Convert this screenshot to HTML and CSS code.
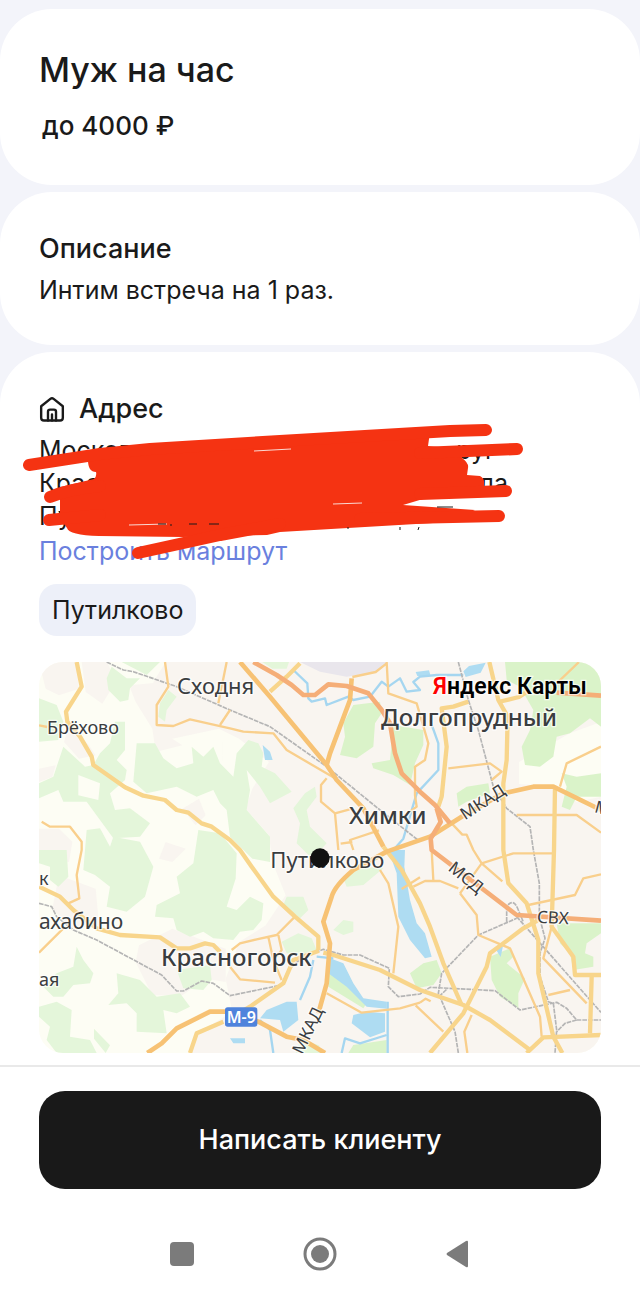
FILE: index.html
```html
<!DOCTYPE html>
<html lang="ru">
<head>
<meta charset="UTF-8">
<meta name="viewport" content="width=device-width, initial-scale=1">
<title>Муж на час</title>
<link rel="stylesheet" href="styles.css">
</head>
<body>

<main class="content">
  <section class="card card-title">
    <h1>Муж на час</h1>
    <p class="price">до 4000 ₽</p>
  </section>

  <section class="card card-description">
    <h2>Описание</h2>
    <p class="text">Интим встреча на 1 раз.</p>
  </section>

  <section class="card card-address">
    <h2 class="with-icon">
      <svg class="icon-home" viewBox="0 0 24 24" aria-hidden="true">
        <path d="M2 9.5 L10.5 2.6 Q12 1.4 13.5 2.6 L22 9.5 V20 Q22 22.6 19.4 22.6 H4.6 Q2 22.6 2 20 Z"/>
        <path d="M8.3 22.5 V14.5 Q8.3 12.6 10.2 12.6 H13.8 Q15.7 12.6 15.7 14.5 V22.5 M12 17 V22.5"/>
      </svg>
      Адрес
    </h2>
    <div class="address">
      <div class="text address-lines">
        <p class="address-line"><span>Московс</span><span>руг</span></p>
        <p class="address-line wide"><span>Крас</span><span>ла</span></p>
        <p class="address-line"><span>Пу</span></p>
      </div>
      <a class="route" href="#route">Построить маршрут</a>
      <svg class="scribble" viewBox="0 0 562 132" aria-hidden="true">
        <path class="fill" d="M49 26 L111 14 L241 3 L391 -2 L389 12 L423 15 L423 24 Q430 29 429 34 L428 41 L441 42 Q446 45 445 50 L445 63 L384 65 L364 71 L436 76 L411 88 L241 98 L228 101 L144 103 L60 102 Q30 101 28 94 L21 84 L21 66 L21 53 L55 45 Q58 42 57 38 Q49 38 49 26 Z"/>
        <path class="stroke" d="M-10 31 L61 20 L111 15 L241 7 L411 -3 L447 -4"/>
        <path class="stroke" d="M381 19 L478 15"/>
        <path class="stroke" d="M11 63 Q30 55 61 52"/>
        <path class="stroke" d="M381 60 L467 57"/>
        <path class="stroke" d="M10 86 L61 81"/>
        <path class="stroke" d="M321 85 L460 82"/>
        <path class="stroke" d="M99 119 L181 101 L241 90"/>
        <path class="slit" d="M90 91 L128 90 M215 17 L252 15 M294 70 L323 69"/>
        <path class="mark" d="M119 90 h8 M132 90 v2 M150 90 h8 M170 90 h10 M309 93 v2 M361 93 v3 M380 93 l-1 3 M398 73 h16"/>
      </svg>
    </div>
    <span class="tag">Путилково</span>

    <svg class="map" viewBox="0 0 1686 1173" role="img" aria-label="Карта">
      <rect class="land" width="1686" height="1173"/>

      <g class="urban">
        <path d="M343 60 L380 0 H1686 V1173 H450 L480 1110 L580 1050 L560 950 L600 840 L680 790 L740 700 L700 600 L690 520 L620 440 L640 380 L690 300 L600 230 L540 200 L400 230 L360 200 Z"/>
        <path d="M0 0 H113 L120 80 L60 100 L20 80 Z M128 0 H205 L230 60 L190 125 L140 90 Z M90 190 L150 250 L170 280 L120 290 L75 240 Z"/>
        <path d="M300 850 L400 800 L560 860 L560 960 L500 950 L430 1000 L340 1000 L290 900 Z M60 640 L170 680 L180 790 L100 800 L40 740 Z"/>
        <path d="M270 70 L380 60 L400 230 L430 250 L350 270 L340 200 L290 120 Z M430 440 L480 410 L500 460 L470 490 Z M0 500 L60 500 L100 540 L90 600 L0 590 Z M380 540 L440 560 L400 600 L360 590 Z"/>
        <path d="M0 320 L50 310 L40 345 L0 360 Z M500 590 L560 570 V650 L510 630 Z"/>
      </g>

      <path class="land" d="M1593 214 L1686 180 V404 L1613 420 L1540 374 L1440 366 L1440 300 Z M693 564 L640 500 L600 540 Z M550 240 L600 230 L590 280 L550 300 Z"/>

      <g class="green">
        <path d="M0 109 L53 129 L73 179 L58 234 L0 239 Z"/>
        <path d="M203 49 L218 14 L263 49 L303 49 L273 79 L268 114 L243 119 L208 84 Z M248 0 H363 L323 39 Z"/>
        <path d="M388 84 L413 104 L383 144 L378 179 L358 164 L363 124 Z"/>
        <path d="M73 254 L138 314 L163 309 L183 274 L213 244 L228 179 L258 179 V264 L233 294 L263 324 L258 354 L213 394 L228 444 L273 439 L333 484 L303 524 L223 529 L183 474 L143 419 L73 419 L58 384 L0 409 V364 L43 344 Z"/>
        <path d="M293 244 L348 244 L373 289 L413 319 L463 304 L458 254 L493 284 L523 254 L543 304 L583 344 L593 274 L628 234 L658 244 L673 274 L668 314 L708 334 L758 389 L693 424 L663 374 L623 324 L633 384 L623 444 L693 524 L693 600 L640 590 L573 524 L563 444 L543 424 L523 384 L473 404 L413 374 L323 394 L283 359 Z"/>
        <path d="M143 504 L183 499 L213 554 L223 524 L303 539 L343 614 L318 704 L263 749 L203 734 L213 674 L168 639 L133 624 Z"/>
        <path d="M478 504 L543 514 L593 574 L590 650 L563 734 L593 744 L633 704 L673 724 L668 774 L643 804 L603 809 L583 834 L523 829 L493 809 L453 824 L413 804 L403 769 L348 764 L353 729 L423 694 L413 644 L463 604 Z"/>
        <path d="M0 564 H83 L88 644 L58 674 L33 654 V614 L0 604 Z"/>
        <path d="M233 934 L303 954 L353 1004 L423 994 L453 1034 L413 1054 L373 1044 L383 1114 L293 1109 V1054 L263 1024 L208 1029 L238 994 Z"/>
        <path d="M103 914 L113 854 L133 894 L163 934 L153 964 L103 969 L73 1004 H43 L13 974 L53 934 Z"/>
        <path d="M0 1034 L53 1019 L98 1044 L93 1124 L153 1134 L173 1173 H53 L23 1134 L33 1094 L0 1064 Z M165 1100 L213 1150 L200 1173 L165 1130 Z"/>
        <path d="M413 924 L513 909 L518 954 L493 984 L433 979 Z"/>
        <path d="M728 839 L778 814 L818 829 L833 864 L773 879 L743 874 Z M743 704 L793 704 L808 744 L783 769 L733 729 Z"/>
        <path d="M883 804 L913 774 L943 779 V809 L913 819 Z M913 649 L973 614 L1033 619 L973 669 L923 674 Z"/>
        <path d="M798 394 L828 374 L833 404 L803 444 L813 494 L863 544 L820 590 L773 544 L783 484 L763 439 Z"/>
        <path d="M670 0 H750 L743 20 L700 20 Z M785 1130 L840 1150 L850 1173 H770 Z"/>
      </g>

      <path class="land" d="M118 339 L183 364 L178 414 L118 400 Z"/>

      <g class="park">
        <path d="M943 129 L1023 119 L1028 154 L1008 184 L1003 254 L953 289 L903 279 L918 224 L913 184 Z"/>
        <path d="M998 304 L1053 294 L1063 189 L1153 204 V249 L1128 304 L1113 369 L1063 339 L1003 319 Z"/>
        <path d="M1398 0 H1686 V194 L1653 169 L1593 214 L1553 224 L1543 284 L1503 314 L1458 309 L1448 254 L1473 204 L1483 144 L1443 74 L1403 54 Z"/>
        <path d="M1568 334 L1613 344 L1686 334 V404 L1613 404 L1593 444 L1568 434 L1583 374 Z M1253 394 L1283 374 L1348 364 L1353 394 L1283 419 L1258 434 Z"/>
        <path d="M1553 784 H1686 V814 L1643 844 L1638 874 L1663 884 V914 L1603 924 L1593 874 L1563 844 Z"/>
        <path d="M1353 884 L1413 859 L1423 884 L1403 904 L1458 949 L1438 994 V1039 L1383 1004 L1358 954 Z"/>
        <path d="M1113 934 L1153 904 L1193 894 L1208 934 L1183 969 L1133 979 Z M928 1173 L943 1149 L1043 1134 V1173 Z M868 929 L903 939 L983 1024 L973 1039 L868 974 Z"/>
      </g>

      <path class="industrial" d="M783 0 H1043 L1013 30 L923 44 L843 29 Z"/>

      <g class="water">
        <path d="M1048 564 H1098 L1096 614 L1113 714 L1133 784 L1158 814 L1178 884 L1158 889 L1113 834 L1078 764 L1073 634 Z"/>
        <path d="M873 889 L913 904 L943 964 L973 1009 L1043 1019 V1040 L983 1034 L923 974 L868 934 Z"/>
        <path d="M943 1059 L983 1049 L1038 1054 V1109 L993 1126 L938 1084 Z"/>
        <path d="M683 1044 L743 1019 L773 1019 L778 1074 L733 1109 L723 1074 L663 1069 Z"/>
        <path d="M573 1129 H618 V1144 H583 Z M671 249 L693 269 L701 294 H678 Z M1370 862 L1392 852 L1385 885 Z"/>
        <path d="M1273 28 L1290 12 L1340 2 L1325 32 L1280 45 Z M1130 30 L1170 25 L1175 42 L1135 42 Z"/>
      </g>
      <g class="river">
        <path d="M763 24 L805 64 L808 109 L818 119 L858 109 L863 129 L928 104 L943 114 L993 104 L1028 59 L1048 74 L1083 49 L1103 89 L1143 84 L1123 60 L1143 44 L1193 39 L1273 39"/>
        <path d="M1173 174 L1198 244 V324 L1133 394 L1093 530 L1063 564"/>
        <path d="M823 894 L813 944 L783 1014"/>
        <path d="M663 1074 L693 1104 L703 1173"/>
        <path d="M908 1173 L918 1129 L963 1144 L1043 1119"/>
        <path d="M1046 1019 V1173 M833 884 L883 889"/>
      </g>

      <g class="rail">
        <path d="M203 0 L253 24 L283 29 L413 74 L573 144 L693 194 L863 314 L1023 444 L1143 539"/>
        <path d="M1258 0 L1288 114 L1318 204 L1363 374 L1403 439 L1473 494 L1483 564 L1501 664 V764 L1518 829 L1503 874 V944 L1528 1019 L1543 1024 L1553 1104 L1548 1173"/>
        <path d="M0 724 L38 734 L53 764 L103 804 L173 834 L368 939 L413 987 H433 L488 957 L523 964 L573 1001 L728 969 L748 924 L793 884 L853 862 L913 879 H963 L1051 919 L1048 974 L1078 1004 L1143 996 L1173 976 L1368 986 L1443 1044 L1553 1021 L1583 1039 L1613 1074 H1686"/>
        <path d="M1613 1074 L1578 1084 L1553 1109 M1258 1173 L1248 1109 L1198 994 L1208 934 L1318 819 L1433 769 M1433 764 L1686 1051 M1403 779 V734 Q1423 705 1438 744 L1453 780 M1200 1004 L1225 980"/>
      </g>

      <g class="road-thin">
        <path d="M378 0 L388 74 L353 129 V189 L403 192 L453 172 L573 199 L613 209 L703 214 L743 264 L888 349"/>
        <path d="M563 0 L538 124 M573 144 L543 189 M863 349 L846 369 V419 L888 454 L898 564 M888 454 L943 439 M905 545 L940 540 M1020 505 L933 534 L943 564"/>
        <path d="M1043 0 L1048 94 L1133 124 L1168 244 L1158 294 L1128 314 V400 L1133 434 L1093 464 M1043 4 L1010 30 L940 45"/>
        <path d="M1228 319 L1353 304 L1388 329 L1358 354 M1686 254 L1583 304 L1563 374 M1433 459 H1613 L1686 512 M1238 484 L1270 518 H1283 L1303 564 L1328 604 L1423 574 H1543 M1328 604 L1263 694 M1328 604 L1390 658"/>
        <path d="M1620 0 L1553 64 M1178 564 L1183 654 M1123 674 L1158 657 H1203 L1258 679 M1263 694 L1313 759 L1318 819 L1413 859 L1503 1064 L1508 1124"/>
        <path d="M1468 729 L1608 699 L1633 649 L1686 637 M1538 794 L1513 889 L1643 1024 M1528 999 L1593 984 M1298 1059 L1276 1109 L1285 1173 M1130 1030 L1213 1109 M1088 681 L1143 646 M1143 1022 L1160 1010 L1175 1018"/>
        <path d="M1023 624 L1048 664 L1078 794 L1063 934 M863 994 L968 1052 L1083 1039 L1143 1022"/>
        <path d="M578 864 L603 844 L653 832 L713 819 L768 764 M688 824 L703 894 L728 954 M718 819 L728 864 L713 884 M573 914 L603 952 L708 962"/>
        <path d="M0 872 L73 799 M8 479 L33 494 H93 L128 539 V564 L113 639 L121 709 L88 724 M0 190 L25 195"/>
      </g>

      <g class="road">
        <path d="M113 0 L128 74 L81 149 L85 179 L123 224 L158 284 L163 309 L258 376 L313 401 L378 414 L413 444 L448 452 L488 484 L518 494 L573 534 L603 564 L638 614 L703 704 L768 764 L838 824 V864"/>
        <path d="M0 674 L63 704 L103 744 L173 799 L243 819 L363 826 L413 859 H453 L498 844 L523 849 L543 869"/>
        <path d="M1351 0 L1378 114 L1406 164 L1403 294 L1393 364 V564 L1408 664 L1463 724 L1498 834 V934 L1543 1124 L1570 1173"/>
        <path d="M1378 120 L1440 105 L1470 85 M1548 374 L1545 564 L1538 794 L1603 884 L1608 939 H1686 M1658 944 L1653 1114"/>
        <path d="M1173 1173 L1273 1054 L1343 914 L1353 874 L1453 799 L1498 774 M1463 1173 L1513 1126 L1686 1119"/>
        <path d="M853 872 L883 879 L1023 924 L1143 984 L1273 1029 L1353 1074 L1473 1164"/>
        <path d="M1288 119 L1243 134 L1208 139 L1223 254 L1208 404 L1198 434 M693 89 L743 44 L783 4"/>
        <path d="M453 1173 L473 1114 L553 1079 M573 1069 L633 1034 L733 964 L763 894 L840 866"/>
        <path d="M1033 554 L1088 624 L1143 724 L1173 794 L1213 904 L1268 1029"/>
      </g>

      <g class="road-main">
        <path d="M603 0 L693 104 L863 309 L893 354 L973 439 L1033 554"/>
        <path d="M938 49 L933 114 L873 274 L863 309"/>
        <path d="M1686 444 L1543 374 H1483 L1393 394 L1268 464 L1173 524 L1043 569 L943 624 Q888 670 878 704 L853 779 L873 844 L863 964 L838 1054"/>
        <path d="M325 1173 L368 1144 L413 1099 L513 1049 H573 L658 1079 L743 1124 L793 1134 L858 1173"/>
      </g>
      <g class="road-fast">
        <path d="M643 0 L713 39 L758 69 L793 99 L828 99 L868 67 L923 72 L988 94 L1028 144 L1053 184 L1068 274 L1088 334 L1143 389 L1188 429 L1233 484"/>
        <path d="M1193 439 L1205 480 L1175 530 L1178 564 L1433 759 L1686 776 M1553 92 L1686 101"/>
      </g>

      <g class="label">
        <text class="town" x="414" y="96">Сходня</text>
        <text class="village" x="24" y="216">Брёхово</text>
        <text class="town" x="694" y="618">Путилково</text>
        <text class="suburb" x="0" y="802">ахабино</text>
        <text class="village" x="0" y="972">ая</text>
        <text class="village" x="0" y="668">к</text>
        <text class="city" x="1026" y="192">Долгопрудный</text>
        <text class="city" x="930" y="486">Химки</text>
        <text class="city" x="366" y="912">Красногорск</text>
        <text class="highway" text-anchor="middle" transform="translate(1340 435) rotate(-33)">МКАД</text>
        <text class="highway" text-anchor="middle" transform="translate(822 1113) rotate(-64)">МКАД</text>
        <text class="highway" text-anchor="middle" transform="translate(1270 660) rotate(39)">МСД</text>
        <text class="highway" transform="translate(1493 782) rotate(3)">СВХ</text>
        <text class="highway" transform="translate(1664 450) rotate(15)">М</text>
      </g>

      <rect class="shield" x="558" y="1036" width="97" height="58" rx="8"/>
      <text class="shield-text" x="607" y="1082" text-anchor="middle">М-9</text>

      <text class="brand" x="1182" y="96"><tspan class="brand-letter">Я</tspan>ндекс Карты</text>
      <circle class="pin" cx="843" cy="588" r="29"/>
    </svg>
  </section>
</main>

<footer class="bottom-bar">
  <button class="write-button" type="button">Написать клиенту</button>
  <nav class="system-nav">
    <button type="button" aria-label="Недавние">
      <svg viewBox="0 0 34 34"><rect x="5" y="5" width="24" height="24" rx="4"/></svg>
    </button>
    <button type="button" aria-label="Домой">
      <svg viewBox="0 0 34 34"><circle class="ring" cx="17" cy="17" r="15"/><circle cx="17" cy="17" r="9"/></svg>
    </button>
    <button type="button" aria-label="Назад">
      <svg viewBox="0 0 34 34"><path d="M27 5 V29 Q27 31 25 30 L6 18 Q5 17 6 16 L25 4 Q27 3 27 5 Z"/></svg>
    </button>
  </nav>
</footer>

</body>
</html>
```

FILE: styles.css
```css
* {
  box-sizing: border-box;
}

body {
  margin: 0;
  background-color: #f3f4fa;
  color: #1a1a1a;
  font-family: Inter, "Noto Sans", sans-serif;
}

h1, h2, p {
  margin: 0;
  font-weight: 500;
}

.content {
  display: flex;
  flex-direction: column;
  gap: 7px;
  padding-top: 9px;
}

.card {
  background-color: #fff;
  border-radius: 52px;
  padding: 40px 39px;
}

.card-description {
  padding-bottom: 38px;
}

.card-address {
  border-radius: 52px 52px 0 0;
  padding-bottom: 12px;
}

h1 {
  font-size: 34px;
  line-height: 42px;
}

h2 {
  font-size: 27px;
  line-height: 34px;
}

.price {
  margin-top: 16px;
  padding-left: 3px;
  font-size: 26px;
  line-height: 38px;
}

.text {
  font-size: 25px;
  line-height: 33px;
}

.card-description .text {
  margin-top: 8px;
}

.text,
.text p {
  font-weight: 400;
}

.with-icon {
  display: flex;
  align-items: center;
  gap: 14px;
}

.icon-home {
  width: 26px;
  height: 26px;
  fill: none;
  stroke: #1a1a1a;
  stroke-width: 2.2;
  stroke-linecap: round;
  stroke-linejoin: round;
}

/* Address block with the marker lines over it */
.address {
  position: relative;
  margin-top: 8px;
}

.address-line {
  display: flex;
  justify-content: space-between;
  max-width: 457px;
}

.address-line.wide {
  max-width: 469px;
}

.route {
  display: block;
  font-size: 25px;
  font-weight: 400;
  line-height: 37px;
  color: #6a80de;
  text-decoration: none;
}

.scribble {
  position: absolute;
  top: 0;
  left: 0;
  width: 562px;
  height: 132px;
  overflow: visible;
  pointer-events: none;
}

.scribble .fill {
  fill: #f53312;
}

.scribble .stroke {
  fill: none;
  stroke: #f53312;
  stroke-width: 12;
  stroke-linecap: round;
  stroke-linejoin: round;
}

.scribble .slit {
  stroke: #fbd9d2;
  stroke-width: 1;
}

.scribble .mark {
  fill: none;
  stroke: #1a1a1a;
  stroke-width: 1;
}

.tag {
  display: inline-block;
  margin-top: 14px;
  padding: 9px 13px;
  border-radius: 18px;
  background-color: #edf0f9;
  font-size: 25px;
  line-height: 34px;
}

/* Map */
.map {
  display: block;
  width: 100%;
  height: auto;
  margin-top: 26px;
  border-radius: 24px;
}

.land { fill: #fdfdf4; }
.urban { fill: #f9f5f0; }
.green { fill: #e4f6da; }
.park { fill: #daf3c9; }
.industrial { fill: #e9e6ec; }
.water { fill: #aedcf2; }

.river,
.rail,
.road,
.road-thin,
.road-main,
.road-fast {
  fill: none;
  stroke-linejoin: round;
}

.river {
  stroke: #a5d6f0;
  stroke-width: 7;
}

.rail {
  stroke: #b5b5b5;
  stroke-width: 5;
  stroke-dasharray: 14 3;
}

.road-thin {
  stroke: #f9cf8c;
  stroke-width: 7;
}

.road {
  stroke: #f8d58b;
  stroke-width: 13;
}

.road-main {
  stroke: #f7c274;
  stroke-width: 14;
}

.road-fast {
  stroke: #f5ae78;
  stroke-width: 14;
}

.label {
  font-family: "Noto Sans", sans-serif;
  fill: #3a3d40;
  stroke: #fff;
  stroke-width: 8;
  stroke-opacity: 0.7;
  stroke-linejoin: round;
  paint-order: stroke;
}

.town { font-size: 66px; }
.suburb { font-size: 63px; }
.village { font-size: 54px; }

.city {
  font-size: 72px;
  font-weight: 500;
}

.highway { font-size: 51px; }

.shield { fill: #4f83dc; }

.shield-text {
  font-family: "Noto Sans", sans-serif;
  font-size: 48px;
  font-weight: 600;
  fill: #fff;
}

.brand {
  font-family: Roboto, sans-serif;
  font-size: 69px;
  font-weight: 600;
  fill: #000;
  stroke: #fff;
  stroke-width: 8;
  stroke-opacity: 0.7;
  paint-order: stroke;
}

.brand-letter { fill: #f00; }

.pin { fill: #111; }

/* Bottom bar */
.bottom-bar {
  border-top: 2px solid #e9e9e9;
  background-color: #fff;
  padding: 24px 39px 22px;
}

.write-button {
  display: block;
  width: 100%;
  padding: 32px;
  border: none;
  border-radius: 26px;
  background-color: #191919;
  color: #fff;
  font-family: inherit;
  font-size: 27px;
  font-weight: 500;
  line-height: 34px;
  cursor: pointer;
}

.system-nav {
  display: flex;
  justify-content: center;
  gap: 104px;
  margin-top: 48px;
}

.system-nav button {
  width: 34px;
  height: 34px;
  padding: 0;
  border: none;
  background: none;
}

.system-nav svg {
  display: block;
  fill: #7b7b7b;
}

.system-nav .ring {
  fill: none;
  stroke: #7b7b7b;
  stroke-width: 3;
}
```
